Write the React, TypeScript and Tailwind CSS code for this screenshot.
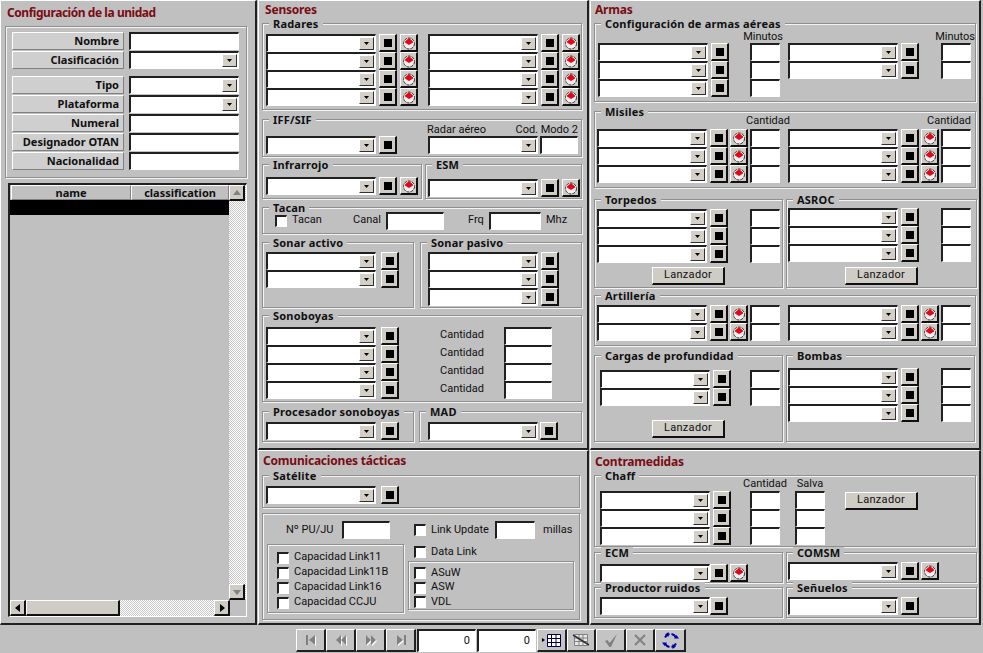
import type { ReactNode } from 'react'

const raised = 'border-t border-l border-b-2 border-r-2 border-t-white border-l-white border-b-[#101010] border-r-[#101010] bg-[#cfccc6]'
const sunken = 'border-t-2 border-l-2 border-b border-r border-t-[#202020] border-l-[#202020] border-b-white border-r-white bg-white'
const boldFont = "font-['Noto_Sans',sans-serif] font-bold"

function Arrow() {
  return (
    <svg width="5" height="3" viewBox="0 0 5 3">
      <path d="M0 0h5L2.500 3z" fill="#000" />
    </svg>
  )
}

function Combo({ className = '' }: { className?: string }) {
  return (
    <div className={`${sunken} w-[110px] h-[18px] shrink-0 flex items-center justify-end pr-[1px] ${className}`}>
      <div className="w-[15px] h-[13px] flex items-center justify-center bg-[#d4d0c8] border-t border-l border-b border-r border-t-white border-l-white border-b-[#303030] border-r-[#303030]">
        <Arrow />
      </div>
    </div>
  )
}

function Input({ className = '' }: { className?: string }) {
  return <div className={`${sunken} h-[18px] shrink-0 ${className}`} />
}

function Btn() {
  return (
    <div className={`${raised} w-[18px] h-[18px] shrink-0 flex items-center justify-center`}>
      <div className="w-[8px] h-[8px] bg-black" />
    </div>
  )
}

function Target() {
  return (
    <div className={`${raised} w-[18px] h-[18px] shrink-0 flex items-center justify-center`}>
      <svg width="14" height="14" viewBox="0 0 14 14">
        <circle cx="7" cy="7.500" r="5.500" fill="#f6eef0" stroke="#303030" strokeDasharray="3 1" />
        <path d="M3 5.500 7 2l4 3.500v1L7 9 3 6.500z" fill="#e00818" />
      </svg>
    </div>
  )
}

function Check() {
  return <div className={`${sunken} w-[12px] h-[12px] shrink-0`} />
}

function Lanzador({ className = '' }: { className?: string }) {
  return (
    <div className={`${raised} w-[73px] h-[18px] flex items-center justify-center text-[11px] tracking-[0.3px] ${className}`}>
      Lanzador
    </div>
  )
}

function Group({ title, className = '', children }: { title?: string; className?: string; children?: ReactNode }) {
  return (
    <div className={`relative shrink-0 border border-[#8f8f8f] shadow-[1px_1px_0_#f4f4f4,inset_1px_1px_0_#f4f4f4] ${className}`}>
      {title && (
        <span className={`absolute -top-[6px] left-[6px] bg-[#c0c0c0] px-[4px] h-[12px] leading-[12px] ${boldFont} text-[11px] tracking-[0.2px] text-[#101010] whitespace-nowrap`}>
          {title}
        </span>
      )}
      {children}
    </div>
  )
}

function Panel({ className = '', title, titleClass = 'h-[22px] pl-[3px] pt-[2px]', children }: { className?: string; title: string; titleClass?: string; children?: ReactNode }) {
  return (
    <div className={`shrink-0 flex flex-col border-t border-l border-b-2 border-r-2 border-t-white border-l-white border-b-[#202020] border-r-[#202020] pl-[3px] ${className}`}>
      <div className={`${titleClass} shrink-0 text-[12px] leading-[14px] tracking-[-0.2px] ${boldFont} text-[#7a0c14]`}>{title}</div>
      {children}
    </div>
  )
}

function Label({ text }: { text: string }) {
  return (
    <div className={`w-[112px] h-[18px] border-t border-l border-b border-r border-t-white border-l-white border-b-[#808080] border-r-[#808080] bg-[#cfcfcf] text-right pr-[4px] text-[11px] leading-[16px] ${boldFont} text-[#101010]`}>
      {text}
    </div>
  )
}

function UnitField({ text, combo, className = '' }: { text: string; combo?: boolean; className?: string }) {
  return (
    <div className={`flex gap-[5px] mb-[1px] ${className}`}>
      <Label text={text} />
      {combo ? <Combo /> : <Input className="w-[110px]" />}
    </div>
  )
}

function ScrollBtn({ dir, muted }: { dir: 'up' | 'down' | 'left' | 'right'; muted?: boolean }) {
  const paths = { up: 'M0 6h8L4 1z', down: 'M0 2h8L4 7z', left: 'M6 0v8L1 4z', right: 'M2 0v8l5-4z' }
  return (
    <div className={`${raised} w-[16px] h-[16px] shrink-0 flex items-center justify-center`}>
      <svg width="8" height="8" viewBox="0 0 8 8">
        <path d={paths[dir]} fill={muted ? '#808080' : '#000'} />
      </svg>
    </div>
  )
}

const dither = 'bg-[repeating-conic-gradient(#fff_0_25%,#c8c8c8_0_50%)] bg-[length:2px_2px]'

function DataGrid() {
  return (
    <div className="ml-[3px] mt-[5px] w-[239px] h-[434px] flex flex-col border-t-2 border-l-2 border-b border-r border-t-[#202020] border-l-[#202020] border-b-white border-r-white">
      <div className="flex-1 flex min-h-0">
        <div className="w-[220px] flex flex-col">
          <div className={`flex h-[15px] text-[11px] leading-[14px] ${boldFont} text-[#101010]`}>
            <div className="w-[120px] ml-[1px] text-center border-t border-l border-b border-r border-t-white border-l-white border-b-[#808080] border-r-[#808080]">name</div>
            <div className="flex-1 text-center border-t border-l border-b border-r border-t-white border-l-white border-b-[#808080] border-r-[#808080]">classification</div>
          </div>
          <div className="h-[15px] bg-black" />
        </div>
        <div className={`w-[17px] flex flex-col ${dither}`}>
          <ScrollBtn dir="up" muted />
          <div className="flex-1" />
          <ScrollBtn dir="down" muted />
        </div>
      </div>
      <div className="h-[16px] flex">
        <ScrollBtn dir="left" />
        <div className={`${raised} w-[94px] h-[16px]`} />
        <div className={`w-[94px] ${dither}`} />
        <ScrollBtn dir="right" />
      </div>
    </div>
  )
}

function NavIcon({ d, bar }: { d: string; bar?: 'left' | 'right' }) {
  return (
    <svg width="14" height="14" viewBox="0 0 14 14">
      <path d={d} fill="#fff" transform="translate(1 1)" />
      <path d={d} fill="#808080" />
      {bar === 'left' && <rect x="2" y="2" width="2" height="10" fill="#808080" />}
      {bar === 'right' && <rect x="10" y="2" width="2" height="10" fill="#808080" />}
    </svg>
  )
}

function ToolBtn({ children, className = 'w-[30px]' }: { children?: ReactNode; className?: string }) {
  return (
    <div className={`border-t border-l border-b-2 border-r-2 border-t-white border-l-white border-b-[#202020] border-r-[#202020] bg-[#c4c4c4] h-[23px] shrink-0 flex items-center justify-center ${className}`}>{children}</div>
  )
}

function Toolbar() {
  return (
    <div className="h-[28px] flex pt-[4px] pl-[296px]">
      <ToolBtn><NavIcon d="M11 2v10L5 7z" bar="left" /></ToolBtn>
      <ToolBtn><NavIcon d="M7 2v10L2 7zM12 2v10L7 7z" /></ToolBtn>
      <ToolBtn><NavIcon d="M2 2v10l5-5zM7 2v10l5-5z" /></ToolBtn>
      <ToolBtn><NavIcon d="M3 2v10l6-5z" bar="right" /></ToolBtn>
      <div className={`${sunken} w-[59px] h-[23px] ml-[1px] text-right pr-[5px] text-[11px] leading-[20px]`}>0</div>
      <div className={`${sunken} w-[59px] h-[23px] ml-[1px] text-right pr-[5px] text-[11px] leading-[20px]`}>0</div>
      <ToolBtn className="w-[30px] ml-[1px]">
        <svg width="20" height="15" viewBox="0 0 20 15">
          <path d="M0 5v4l3-2z" fill="#000" />
          <path d="M5.500 1.500h13v12h-13zM5.500 5.500h13M5.500 9.500h13M9.500 1.500v12M14 1.500v12" fill="#fff" stroke="#000048" />
        </svg>
      </ToolBtn>
      <ToolBtn className="w-[29px]">
        <svg width="20" height="15" viewBox="0 0 20 15">
          <path d="M3.500 1.500h13v11h-13zM3.500 5h13M3.500 8.500h13M8 1.500v11M12 1.500v11" fill="#e8e8e8" stroke="#808080" />
          <path d="M2 2l16 10" stroke="#303030" strokeWidth="1.500" />
        </svg>
      </ToolBtn>
      <ToolBtn className="w-[30px]">
        <svg width="16" height="15" viewBox="0 0 16 15">
          <path d="M2 8l2.500-1 2 3L14 1 8 14H6.500z" fill="#808080" />
        </svg>
      </ToolBtn>
      <ToolBtn className="w-[29px]">
        <svg width="14" height="14" viewBox="0 0 14 14">
          <path d="M2 2l10 10M12 2 2 12" stroke="#808080" strokeWidth="2" />
        </svg>
      </ToolBtn>
      <ToolBtn className="w-[31px]">
        <svg width="17" height="17" viewBox="0 0 17 17" fill="none" stroke="#0000b0" strokeWidth="2">
          <path d="M3 5.500A6.500 6.500 0 0 1 7.500 2.100" />
          <path d="M9.500 2.100A6.500 6.500 0 0 1 14 5.500" />
          <path d="M14 11.500A6.500 6.500 0 0 1 9.500 14.900" />
          <path d="M7.500 14.900A6.500 6.500 0 0 1 3 11.500" />
          <path d="M6.500 0v5L3 2.500zM10.500 17v-5L14 14.500zM0 10.500h5L2.500 14zM17 6.500h-5L14.500 3z" fill="#0000b0" stroke="none" />
        </svg>
      </ToolBtn>
    </div>
  )
}

function UnitPanel() {
  return (
    <div className="w-[257px] h-[625px] shrink-0 flex flex-col border-t border-l border-b-2 border-r-2 border-t-white border-l-white border-b-[#202020] border-r-[#202020] pl-[4px]">
      <div className={`h-[25px] shrink-0 pl-[2px] pt-[5px] text-[12px] leading-[14px] tracking-[-0.45px] ${boldFont} text-[#7a0c14]`}>Configuración de la unidad</div>
      <Group className="w-[242px] h-[152px] pl-[6px] pt-[5px]">
        <UnitField text="Nombre" />
        <UnitField text="Clasificación" combo className="mb-[7px]" />
        <UnitField text="Tipo" combo />
        <UnitField text="Plataforma" combo />
        <UnitField text="Numeral" />
        <UnitField text="Designador OTAN" />
        <UnitField text="Nacionalidad" />
      </Group>
      <DataGrid />
    </div>
  )
}

function SensorRow({ target }: { target?: boolean }) {
  return (
    <div className="flex gap-[3px]">
      <Combo />
      <Btn />
      {target && <Target />}
    </div>
  )
}

function Sensores() {
  return (
    <Panel className="w-[331px] h-[450px]" title="Sensores">
      <Group title="Radares" className="w-[320px] h-[87px] flex gap-[10px] pl-[3px] pt-[10px]">
        <div className="flex flex-col">
          <SensorRow target /><SensorRow target /><SensorRow target /><SensorRow target />
        </div>
        <div className="flex flex-col">
          <SensorRow target /><SensorRow target /><SensorRow target /><SensorRow target />
        </div>
      </Group>
      <Group title="IFF/SIF" className="mt-[9px] w-[320px] h-[38px] flex items-end pl-[3px] pb-[2px]">
        <SensorRow />
        <div className="ml-[31px] w-[150px] flex flex-col">
          <div className="flex justify-between h-[15px] text-[11px] leading-[17px] text-[#101010] -ml-[1px]">
            <span>Radar aéreo</span>
            <span>Cod. Modo 2</span>
          </div>
          <div className="flex gap-[2px]">
            <Combo />
            <Input className="w-[38px]" />
          </div>
        </div>
      </Group>
      <div className="mt-[7px] flex gap-[3px]">
        <Group title="Infrarrojo" className="w-[160px] h-[35px] pl-[3px] pt-[12px]"><SensorRow target /></Group>
        <Group title="ESM" className="w-[157px] h-[35px] pl-[2px] pt-[14px]"><SensorRow target /></Group>
      </div>
      <Group title="Tacan" className="mt-[8px] w-[320px] h-[27px] flex items-center pl-[12px] text-[11px] text-[#101010]">
        <Check />
        <span className="ml-[5px] w-[61px]">Tacan</span>
        <span className="w-[33px]">Canal</span>
        <Input className="w-[58px]" />
        <span className="ml-[24px] w-[21px]">Frq</span>
        <Input className="w-[52px]" />
        <span className="ml-[5px]">Mhz</span>
      </Group>
      <div className="mt-[8px] flex gap-[6px]">
        <Group title="Sonar activo" className="w-[152px] h-[66px] pl-[3px] pt-[9px]">
          <div className="flex gap-[5px]"><Combo /><Btn /></div>
          <div className="flex gap-[5px]"><Combo /><Btn /></div>
        </Group>
        <Group title="Sonar pasivo" className="w-[162px] h-[66px] pl-[7px] pt-[9px]">
          <SensorRow /><SensorRow /><SensorRow />
        </Group>
      </div>
      <Group title="Sonoboyas" className="mt-[7px] w-[320px] h-[87px] pl-[3px] pt-[11px]">
        {[0, 1, 2, 3].map((i) => (
          <div key={i} className="flex gap-[5px]">
            <Combo />
            <Btn />
            <span className="ml-[36px] w-[59px] text-[11px] leading-[15px] text-[#101010]">Cantidad</span>
            <Input className="w-[48px]" />
          </div>
        ))}
      </Group>
      <div className="mt-[9px] flex gap-[5px]">
        <Group title="Procesador sonoboyas" className="w-[152px] h-[31px] pl-[3px] pt-[10px]">
          <div className="flex gap-[5px]"><Combo /><Btn /></div>
        </Group>
        <Group title="MAD" className="w-[163px] h-[31px] pl-[8px] pt-[10px]">
          <div className="flex gap-[2px]"><Combo /><Btn /></div>
        </Group>
      </div>
    </Panel>
  )
}

function CheckRow({ text, className = '' }: { text: string; className?: string }) {
  return (
    <div className={`flex items-center text-[11px] text-[#101010] ${className}`}>
      <Check />
      <span className="ml-[5px] whitespace-nowrap">{text}</span>
    </div>
  )
}

function Comunicaciones() {
  return (
    <Panel className="w-[331px] h-[175px]" title="Comunicaciones tácticas" titleClass="h-[24px] pl-[1px] pt-[3px]">
      <Group title="Satélite" className="w-[318px] h-[33px] pl-[3px] pt-[10px]">
        <div className="flex gap-[5px]"><Combo /><Btn /></div>
      </Group>
      <Group className="mt-[5px] w-[318px] h-[107px] flex pt-[7px]">
        <div className="ml-[4px] w-[137px]">
          <div className="flex items-center h-[18px] text-[11px] text-[#101010]">
            <span className="ml-[19px] w-[56px]">Nº PU/JU</span>
            <Input className="w-[48px]" />
          </div>
          <Group className="mt-[5px] w-[137px] h-[69px] pl-[9px] pt-[5px]">
            <CheckRow text="Capacidad Link11" className="h-[15px]" />
            <CheckRow text="Capacidad Link11B" className="h-[15px]" />
            <CheckRow text="Capacidad Link16" className="h-[15px]" />
            <CheckRow text="Capacidad CCJU" className="h-[15px]" />
          </Group>
        </div>
        <div className="ml-[4px] w-[166px]">
          <div className="flex items-center h-[18px] pl-[6px] text-[11px] text-[#101010]">
            <Check />
            <span className="ml-[5px] w-[64px]">Link Update</span>
            <Input className="w-[40px]" />
            <span className="ml-[8px]">millas</span>
          </div>
          <CheckRow text="Data Link" className="h-[18px] pl-[6px] mt-[4px]" />
          <Group className="w-[166px] h-[49px] pl-[5px] pt-[4px]">
            <CheckRow text="ASuW" className="h-[14px]" />
            <CheckRow text="ASW" className="h-[15px]" />
            <CheckRow text="VDL" className="h-[14px]" />
          </Group>
        </div>
      </Group>
    </Panel>
  )
}

function WeaponRow({ target, input = true }: { target?: boolean; input?: boolean }) {
  return (
    <div className="flex gap-[2px]">
      <Combo className="mr-[1px]" />
      <Btn />
      {target && <Target />}
      {input && <Input className="ml-auto w-[30px]" />}
    </div>
  )
}

function ColHeader({ text, className = '' }: { text: string; className?: string }) {
  return (
    <div className={`flex justify-end items-end text-[11px] leading-[14px] text-[#101010] ${className}`}>{text}</div>
  )
}

function Armas() {
  return (
    <Panel className="w-[391px] h-[450px]" title="Armas" titleClass="h-[22px] pl-[1px] pt-[2px]">
      <Group title="Configuración de armas aéreas" className="w-[382px] h-[79px] flex gap-[8px] pl-[3px]">
        <div className="w-[182px]">
          <ColHeader text="Minutos" className="h-[20px] -mb-[1px] -mr-[3px]" />
          <WeaponRow /><WeaponRow /><WeaponRow />
        </div>
        <div className="w-[183px]">
          <ColHeader text="Minutos" className="h-[20px] -mb-[1px] -mr-[4px]" />
          <WeaponRow /><WeaponRow />
        </div>
      </Group>
      <Group title="Misiles" className="mt-[9px] w-[382px] h-[77px] flex gap-[8px] pl-[2px]">
        <div className="w-[183px]">
          <ColHeader text="Cantidad" className="h-[17px] pb-[1px] -mr-[10px]" />
          <WeaponRow target /><WeaponRow target /><WeaponRow target />
        </div>
        <div className="w-[183px]">
          <ColHeader text="Cantidad" className="h-[17px] pb-[1px]" />
          <WeaponRow target /><WeaponRow target /><WeaponRow target />
        </div>
      </Group>
      <div className="mt-[11px] flex gap-[3px]">
        <Group title="Torpedos" className="w-[189px] h-[89px] pl-[2px] pt-[9px]">
          <div className="w-[183px]">
            <WeaponRow /><WeaponRow /><WeaponRow />
            <Lanzador className="ml-[55px] mt-[4px]" />
          </div>
        </Group>
        <Group title="ASROC" className="w-[191px] h-[89px] pl-[1px] pt-[8px]">
          <div className="w-[183px]">
            <WeaponRow /><WeaponRow /><WeaponRow />
            <Lanzador className="ml-[57px] mt-[5px]" />
          </div>
        </Group>
      </div>
      <Group title="Artillería" className="mt-[7px] w-[382px] h-[51px] flex gap-[8px] pl-[2px] pt-[9px]">
        <div className="w-[183px]"><WeaponRow target /><WeaponRow target /></div>
        <div className="w-[183px]"><WeaponRow target /><WeaponRow target /></div>
      </Group>
      <div className="mt-[9px] flex gap-[3px]">
        <Group title="Cargas de profundidad" className="w-[189px] h-[87px] pl-[5px] pt-[14px]">
          <div className="w-[180px]">
            <WeaponRow /><WeaponRow />
            <Lanzador className="ml-[52px] mt-[14px]" />
          </div>
        </Group>
        <Group title="Bombas" className="w-[189px] h-[87px] pl-[1px] pt-[12px]">
          <div className="w-[183px]">
            <WeaponRow /><WeaponRow /><WeaponRow />
          </div>
        </Group>
      </div>
    </Panel>
  )
}

function Contramedidas() {
  return (
    <Panel className="w-[391px] h-[175px]" title="Contramedidas" titleClass="h-[24px] pl-[1px] pt-[4px]">
      <Group title="Chaff" className="w-[382px] h-[72px] flex pl-[5px]">
        <div className="pt-[15px]">
          <SensorRow /><SensorRow /><SensorRow />
        </div>
        <div className="ml-[19px] w-[30px] flex flex-col items-center">
          <span className="h-[15px] text-[11px] leading-[15px] text-[#101010] whitespace-nowrap">Cantidad</span>
          <Input className="w-[30px]" /><Input className="w-[30px]" /><Input className="w-[30px]" />
        </div>
        <div className="ml-[15px] w-[30px] flex flex-col items-center">
          <span className="h-[15px] text-[11px] leading-[15px] text-[#101010] whitespace-nowrap">Salva</span>
          <Input className="w-[30px]" /><Input className="w-[30px]" /><Input className="w-[30px]" />
        </div>
        <Lanzador className="ml-[20px] mt-[16px]" />
      </Group>
      <div className="mt-[5px] flex gap-[3px]">
        <Group title="ECM" className="w-[189px] h-[31px] pl-[5px] pt-[11px] flex gap-[2px]">
          <Combo className="-mr-[2px]" /><Btn /><Target />
        </Group>
        <Group title="COMSM" className="w-[191px] h-[31px] pl-[1px] pt-[9px]">
          <WeaponRow target input={false} />
        </Group>
      </div>
      <div className="mt-[4px] flex gap-[3px]">
        <Group title="Productor ruidos" className="w-[189px] h-[31px] pl-[5px] pt-[9px] flex">
          <Combo /><Btn />
        </Group>
        <Group title="Señuelos" className="w-[191px] h-[31px] pl-[1px] pt-[9px]">
          <WeaponRow input={false} />
        </Group>
      </div>
    </Panel>
  )
}

export default function App() {
  return (
    <div className="w-[983px] h-[653px] overflow-hidden flex flex-col bg-[#c0c0c0] text-[#101010] font-['Roboto',sans-serif]">
      <div className="h-[625px] flex">
        <UnitPanel />
        <div className="ml-[1px] flex flex-col">
          <Sensores />
          <Comunicaciones />
        </div>
        <div className="ml-[1px] flex flex-col">
          <Armas />
          <Contramedidas />
        </div>
      </div>
      <Toolbar />
    </div>
  )
}
